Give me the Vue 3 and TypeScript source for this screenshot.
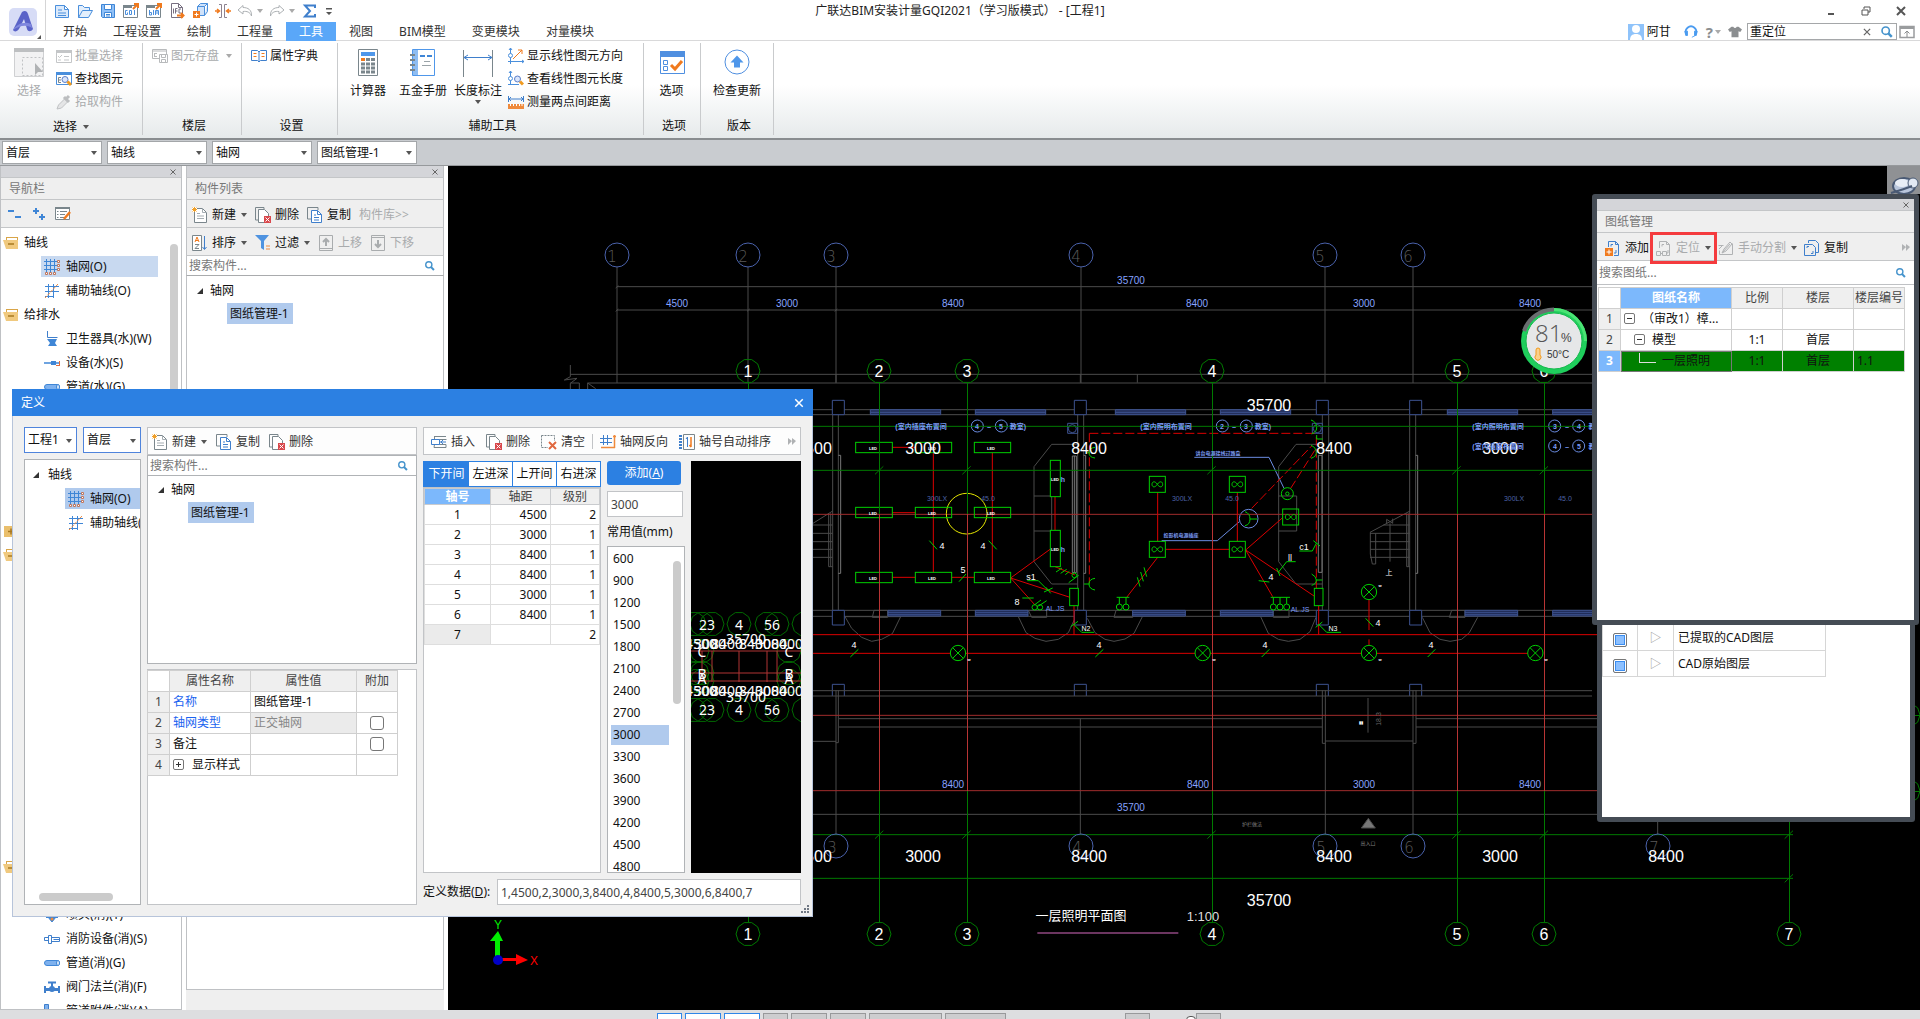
<script setup lang="ts">
import { ref } from 'vue'

const tabs = ['开始', '工程设置', '绘制', '工程量', '工具', '视图', 'BIM模型', '变更模块', '对量模块']
const activeTab = ref('工具')

const quick = ['new', 'open', 'save', 'gqi', 'bim', 'ifc', 'cube', 'merge']
const combos = ['首层', '轴线', '轴网', '图纸管理-1']

interface NavRow { label?: string; icon?: string; folder?: boolean; selected?: boolean }
const blank = (n: number): NavRow[] => Array.from({ length: n }, () => ({}))
const navRows: NavRow[] = [
  { label: '轴线', icon: 'folder-open', folder: true },
  { label: '轴网(O)', icon: 'grid', selected: true },
  { label: '辅助轴线(O)', icon: 'grid-aux' },
  { label: '给排水', icon: 'folder-open', folder: true },
  { label: '卫生器具(水)(W)', icon: 'toilet' },
  { label: '设备(水)(S)', icon: 'pump' },
  { label: '管道(水)(G)', icon: 'pipe' },
  ...blank(5),
  { icon: 'folder-closed', folder: true },
  { icon: 'folder-open', folder: true },
  ...blank(12),
  { icon: 'folder-open', folder: true },
  ...blank(1),
  { label: '喷头(消)(T)', icon: 'sprinkler' },
  { label: '消防设备(消)(S)', icon: 'fire' },
  { label: '管道(消)(G)', icon: 'pipe' },
  { label: '阀门法兰(消)(F)', icon: 'valve' },
  { label: '管道附件(消)(A)', icon: 'fitting' },
]

const spans = [
  ['1', '4500', '2'], ['2', '3000', '1'], ['3', '8400', '1'], ['4', '8400', '1'],
  ['5', '3000', '1'], ['6', '8400', '1'], ['7', '', '2'],
]
const spanTabs = ['下开间', '左进深', '上开间', '右进深']
const activeSpan = ref('下开间')
const common = ['600', '900', '1200', '1500', '1800', '2100', '2400', '2700', '3000', '3300', '3600', '3900', '4200', '4500', '4800']
const spacing = ref('3000')
const definition = ref('1,4500,2,3000,3,8400,4,8400,5,3000,6,8400,7')
const keyword = ref('重定位')

const greyAxes = [617, 748, 836, 1081, 1325, 1413]
const greenAxes = [748, 879, 967, 1212, 1457, 1544]
const decagon = (cx: number, cy: number, r = 12): string =>
  Array.from({ length: 10 }, (_, i) => {
    const a = (i * Math.PI) / 5
    return `${Math.round((cx + r * Math.cos(a)) * 10) / 10},${Math.round((cy + r * Math.sin(a)) * 10) / 10}`
  }).join(' ')

interface Note { t: string; x: number; y: number; c: string }
const notes: Note[] = [
  { t: '35700', x: 1131, y: 284, c: 'dim' },
  { t: '4500', x: 677, y: 307, c: 'dim' },
  { t: '3000', x: 787, y: 307, c: 'dim' },
  { t: '8400', x: 953, y: 307, c: 'dim' },
  { t: '8400', x: 1197, y: 307, c: 'dim' },
  { t: '3000', x: 1364, y: 307, c: 'dim' },
  { t: '8400', x: 1530, y: 307, c: 'dim' },
  { t: '8400', x: 953, y: 788, c: 'dim' },
  { t: '8400', x: 1198, y: 788, c: 'dim' },
  { t: '3000', x: 1364, y: 788, c: 'dim' },
  { t: '8400', x: 1530, y: 788, c: 'dim' },
  { t: '35700', x: 1131, y: 811, c: 'dim' },
  { t: '35700', x: 1269, y: 411, c: 'big' },
  { t: '4500', x: 814, y: 454, c: 'big' },
  { t: '3000', x: 923, y: 454, c: 'big' },
  { t: '8400', x: 1089, y: 454, c: 'big' },
  { t: '8400', x: 1334, y: 454, c: 'big' },
  { t: '3000', x: 1500, y: 454, c: 'big' },
  { t: '4500', x: 814, y: 862, c: 'big' },
  { t: '3000', x: 923, y: 862, c: 'big' },
  { t: '8400', x: 1089, y: 862, c: 'big' },
  { t: '8400', x: 1334, y: 862, c: 'big' },
  { t: '3000', x: 1500, y: 862, c: 'big' },
  { t: '8400', x: 1666, y: 862, c: 'big' },
  { t: '35700', x: 1269, y: 906, c: 'big' },
  { t: '(室内插座布置间', x: 921, y: 429, c: 'room' },
  { t: '教室)', x: 1018, y: 429, c: 'room' },
  { t: '~', x: 989, y: 430, c: 'room' },
  { t: '(室内照明布置间', x: 1166, y: 429, c: 'room' },
  { t: '~', x: 1234, y: 430, c: 'room' },
  { t: '教室)', x: 1263, y: 429, c: 'room' },
  { t: '(室内照明布置间', x: 1498, y: 429, c: 'room' },
  { t: '(室内插座布置间', x: 1498, y: 449, c: 'room' },
  { t: '~', x: 1567, y: 430, c: 'room' },
  { t: '~', x: 1567, y: 450, c: 'room' },
  { t: '教', x: 1592, y: 429, c: 'room' },
  { t: '教', x: 1592, y: 449, c: 'room' },
  { t: '4', x: 977, y: 429, c: 'room' },
  { t: '5', x: 1001, y: 429, c: 'room' },
  { t: '2', x: 1222, y: 429, c: 'room' },
  { t: '3', x: 1246, y: 429, c: 'room' },
  { t: '3', x: 1555, y: 429, c: 'room' },
  { t: '4', x: 1579, y: 429, c: 'room' },
  { t: '4', x: 1555, y: 449, c: 'room' },
  { t: '5', x: 1579, y: 449, c: 'room' },
  { t: '讲台电源接线过路盒', x: 1218, y: 455, c: 'tiny' },
  { t: '投影机电源插座', x: 1181, y: 537, c: 'tiny' },
  { t: 'h', x: 1063, y: 482, c: 'room' },
  { t: 'h', x: 1063, y: 552, c: 'room' },
  { t: '300LX', x: 937, y: 501, c: 'lux' },
  { t: '45.0', x: 988, y: 501, c: 'lux' },
  { t: '300LX', x: 1182, y: 501, c: 'lux' },
  { t: '45.0', x: 1232, y: 501, c: 'lux' },
  { t: '300LX', x: 1514, y: 501, c: 'lux' },
  { t: '45.0', x: 1565, y: 501, c: 'lux' },
  { t: 'AL.JS', x: 1055, y: 611, c: 'al' },
  { t: 'AL.JS', x: 1300, y: 612, c: 'al' },
  { t: '4', x: 942, y: 549, c: 'num' },
  { t: '4', x: 983, y: 549, c: 'num' },
  { t: '5', x: 963, y: 573, c: 'num' },
  { t: '8', x: 1017, y: 605, c: 'num' },
  { t: 's1', x: 1031, y: 580, c: 'num' },
  { t: 'c1', x: 1304, y: 550, c: 'num' },
  { t: 'll', x: 1290, y: 561, c: 'num' },
  { t: '4', x: 1271, y: 580, c: 'num' },
  { t: '4', x: 854, y: 648, c: 'num' },
  { t: '4', x: 1099, y: 648, c: 'num' },
  { t: '4', x: 1265, y: 648, c: 'num' },
  { t: '4', x: 1431, y: 648, c: 'num' },
  { t: '4', x: 1378, y: 626, c: 'num' },
  { t: 'N2', x: 1086, y: 631, c: 'tag' },
  { t: 'N3', x: 1333, y: 631, c: 'tag' },
  { t: '上', x: 1389, y: 575, c: 'up' },
  { t: 'w', x: 969, y: 661, c: 'led' },
  { t: 'w', x: 1214, y: 661, c: 'led' },
  { t: 'w', x: 1380, y: 661, c: 'led' },
  { t: 'w', x: 1546, y: 661, c: 'led' },
  { t: 'w', x: 1380, y: 587, c: 'led' },
  { t: '▮▮', x: 1361, y: 724, c: 'led' },
  { t: '护栏做法', x: 1252, y: 826, c: 'faint' },
  { t: '出入口', x: 1368, y: 845, c: 'faint' },
  { t: '一层照明平面图', x: 1081, y: 920, c: 'caption' },
  { t: '1:100', x: 1203, y: 921, c: 'ratio' },
]
const leds = [874, 933, 992].flatMap((x) => [448, 513, 578].map((y) => ({ x: x - 1, y: y + 2 })))
const lamps = [[474, 849], [1208, 849], [1707, 666], [1707, 849], [2206, 849]]
const fans = [[1048, 319], [1048, 514], [1288, 319], [1288, 514], [1448, 417]]
const windowsTop = [211, 526, 946, 1261, 1942, 2258]
const windowsLow = [264, 526, 998, 1261, 1995, 2258]
const columns = [97, 823, 1549, 1829]
const dimTicks = [238, 500, 1235, 1970, 2232, 2967]
</script>

<template>
  <div class="app">
    <svg class="sprite" width="0" height="0" aria-hidden="true">
      <symbol id="i-new" viewBox="0 0 16 16"><path d="M1.500 2.500h9l4 4v8h-13zM10.500 2.500v4h4M4 7h4M4 10h8M4 12.500h8" fill="#dceafb" stroke="#4a8fdc" /></symbol>
      <symbol id="i-open" viewBox="0 0 16 16"><path d="M1.500 14.500v-12h4l2 2h5v3M1.500 14.500l4-7h10l-4 7z" fill="#e4effc" stroke="#4a8fdc" /></symbol>
      <symbol id="i-save" viewBox="0 0 16 16"><path d="M1.500 1.500h13v13h-12l-1-1z" fill="#8fc0f7" stroke="#3f86d6" /><path d="M4.500 1.500h7v5h-7zM4.500 9.500h7v5h-7z" fill="#fff" stroke="#3f86d6" /><path d="M6 11.500h4M6 13h4" stroke="#3f86d6" /></symbol>
      <symbol id="i-gqi" viewBox="0 0 16 16"><path d="M.500 2.500h14v12H.500z" fill="#fff" stroke="#7a868c" /><path d="M0 2h9v3H0z" fill="#7a868c" /><path d="M4.500 7.500h-2v4h2v-2M6.500 7.500h2v4h-2zM11.500 7v5" fill="none" stroke="#4a8fdc" /><path d="M10 6l5-5M11 1h4v4" stroke="#f07a1e" stroke-width="2" fill="none" /></symbol>
      <symbol id="i-bim" viewBox="0 0 16 16"><path d="M.500 2.500h14v12H.500z" fill="#fff" stroke="#7a868c" /><path d="M0 2h9v3H0z" fill="#7a868c" /><path d="M3.500 7v5h2V9.500h-2M7.500 7v5M9.500 12V7.500h3V12M11 8v3" fill="none" stroke="#4a8fdc" /><path d="M10 6l5-5M11 1h4v4" stroke="#f07a1e" stroke-width="2" fill="none" /></symbol>
      <symbol id="i-ifc" viewBox="0 0 16 16"><path d="M2.500.500h7l4 4v10h-11zM9.500.500v4h4" fill="#fff" stroke="#776f80" /><path d="M4.500 5.500v5M6.500 10.500v-5h2M6.500 8h2M12 6h-2v4h2" fill="none" stroke="#776f80" /><path d="M8 12.500h6M12 10l2.500 2.500L12 15" fill="none" stroke="#f07a1e" stroke-width="2" /></symbol>
      <symbol id="i-cube" viewBox="0 0 16 16"><path d="M5.500 3.500h7v9h-7zM5.500 3.500l3-3h7l-3 3M15.500.500v8l-3 4" fill="#cfe2fa" stroke="#4a8fdc" /><path d="M1 8h7v7H1z" fill="#f07a1e" /><path d="M4.500 9.500v4M2.500 11.500h4" stroke="#fff" /></symbol>
      <symbol id="i-merge" viewBox="0 0 16 16"><path d="M4 1.500h2.500v13H4M12 1.500H9.500v13H12" fill="none" stroke="#8d8290" /><path d="M0 8h4M2 6l2.500 2L2 10M16 8h-4M14 6l-2.500 2 2.500 2" fill="none" stroke="#f07a1e" stroke-width="1.500" /></symbol>
      <symbol id="i-undo" viewBox="0 0 16 16"><path d="M6 2.500L1 7l5 4V8.500c4-.500 7 .500 8.500 4.500C15 7 11 4.500 6 4.500z" fill="#fff" stroke="#adb1b4" /></symbol>
      <symbol id="i-redo" viewBox="0 0 16 16"><path d="M10 2.500L15 7l-5 4V8.500C6 8 3 9 1.500 13 1 7 5 4.500 10 4.500z" fill="#fff" stroke="#adb1b4" /></symbol>
      <symbol id="i-sigma" viewBox="0 0 16 16"><path d="M13 5V2.500H3L8 8l-5 5.500h10V11" fill="none" stroke="#3f7fcc" stroke-width="2" /></symbol>
      <symbol id="i-more" viewBox="0 0 16 16"><path d="M5 5h6v1.500H5zM5 9h6l-3 3z" fill="#555" /></symbol>
      <symbol id="i-find" viewBox="0 0 16 16"><path d="M.500 1.500h15v12H.500z" fill="#fff" stroke="#4a8fdc" /><path d="M0 1h16v3H0z" fill="#4a8fdc" /><path d="M5 6.500H2.500v5H5M2.500 9H5" fill="none" stroke="#7a868c" /><circle cx="9" cy="8.500" r="3" fill="#dbe6fb" stroke="#5b7fc9" /><path d="M11.500 10.500l3.500 3.500" stroke="#f09a1e" stroke-width="3" /></symbol>
      <symbol id="i-batch" viewBox="0 0 16 16"><path d="M.500 2.500h15v12H.500z" fill="#fff" stroke="#c4c6c8" /><path d="M0 2h16v3H0z" fill="#c4c6c8" /><path d="M2 8l1.500 1.500L6 7M2 12h3M8 8.500h5M8 12h5" fill="none" stroke="#c4c6c8" /></symbol>
      <symbol id="i-pick" viewBox="0 0 16 16"><path d="M1 15l1.500-4 6-6 3 3-6 6z" fill="#e4e5e6" stroke="#c0c2c4" /><path d="M8 3l5 5M10 5l3-3" stroke="#bcbec0" stroke-width="3" /></symbol>
      <symbol id="i-store" viewBox="0 0 16 16"><path d="M.500 1.500h14v9H.500zM0 3h15" fill="none" stroke="#b8babc" /><path d="M2.500 5v4M5 5.500H3M5 8.500H3" stroke="#b8babc" /><path d="M7.500 6.500h8v8h-8zM9.500 6.500v3h4v-3M9.500 14v-2.500h4V14" fill="#fff" stroke="#b8babc" /></symbol>
      <symbol id="i-book" viewBox="0 0 16 16"><path d="M.500 2.500h6L8 4l1.500-1.500h6v10h-6L8 14l-1.500-1.500h-6zM8 4v10" fill="#fff" stroke="#3f7fcc" /><path d="M2.500 5.500h3M10.500 5.500h3" stroke="#f07a1e" /><path d="M2.500 8.500h3M10.500 8.500h3" stroke="#f07a1e" /></symbol>
      <symbol id="i-dir" viewBox="0 0 16 16"><path d="M2.500 0v16M0 13.500h16M1 2l1.500-2L4 2M14 12l2 1.500-2 1.500" fill="none" stroke="#4a8fdc" /><circle cx="2.500" cy="7.500" r="2" fill="#fff" stroke="#4a8fdc" /><path d="M5 11l9-9M10 2h4v4" fill="none" stroke="#f07a1e" /></symbol>
      <symbol id="i-len" viewBox="0 0 16 16"><path d="M2.500 0v14M0 13.500h11M1 2l1.500-2L4 2" fill="none" stroke="#4a8fdc" /><circle cx="2.500" cy="7.500" r="2" fill="#fff" stroke="#4a8fdc" /><circle cx="9.500" cy="8" r="3" fill="#dbe6fb" stroke="#5b7fc9" /><path d="M12 10.500l3 3" stroke="#f09a1e" stroke-width="3" /></symbol>
      <symbol id="i-measure" viewBox="0 0 16 16"><path d="M.500 2v6M15.500 2v6M1 5h14M3 3L1 5l2 2M13 3l2 2-2 2" fill="none" stroke="#3f7fcc" /><path d="M0 10h16v5H0z" fill="#ef8a3c" /><path d="M2.500 10v2M5.500 10v2M8.500 10v2M11.500 10v2M14 10v2" stroke="#fff" /></symbol>
      <symbol id="i-search" viewBox="0 0 16 16"><circle cx="7" cy="7" r="4.500" fill="none" stroke="#4593cc" stroke-width="2" /><path d="M10 10l4.500 4.500" stroke="#4593cc" stroke-width="3" /></symbol>
      <symbol id="i-minus" viewBox="0 0 16 16"><path d="M1 5h6M8 11h6" stroke="#3f86d6" stroke-width="2" /></symbol>
      <symbol id="i-plus" viewBox="0 0 16 16"><path d="M2 5h6M5 2v6M8 11h6M11 8v6" stroke="#3f86d6" stroke-width="2" /></symbol>
      <symbol id="i-edit" viewBox="0 0 16 16"><path d="M.500 1.500h14v12H.500z" fill="#fff" stroke="#7a868c" /><path d="M0 1h15v2H0z" fill="#7a868c" /><path d="M2 5.500h1.500M5 5.500h7M2 8.500h1.500M5 8.500h5M2 11.500h1.500M5 11.500h4" stroke="#7a868c" /><path d="M9 13l6-7" stroke="#f07a1e" stroke-width="2.500" /></symbol>
      <symbol id="i-folder-open" viewBox="0 0 16 16"><path d="M3 2h12v9H3z" fill="#d9a548" /><path d="M4 3h10v2H4z" fill="#fff" /><path d="M0 5h13l2 0v9H3z" fill="#f0c97e" /><path d="M5 9h6" stroke="#a87820" stroke-width="1.500" /></symbol>
      <symbol id="i-folder-closed" viewBox="0 0 16 16"><path d="M1 3h14v11H1z" fill="#eabf6c" /><path d="M5 8.500h6M8 5.500v6" stroke="#a87820" stroke-width="1.500" /></symbol>
      <symbol id="i-grid" viewBox="0 0 16 16"><path d="M0 2.500h13M0 6.500h13M0 10.500h13M2.500 0v13M6.500 0v13M10.500 0v13" stroke="#3f86d6" /><path d="M13.500 1.500h2v2h-2zM13.500 5.500h2v2h-2zM13.500 9.500h2v2h-2zM1.500 13.500h2v2h-2zM5.500 13.500h2v2h-2zM9.500 13.500h2v2h-2z" fill="#fff" stroke="#c0765c" /></symbol>
      <symbol id="i-grid-aux" viewBox="0 0 16 16"><path d="M1 3.500h14M1 8.500h14M1 13.500h9M4.500 1v14M9.500 1v14" stroke="#3f86d6" /><path d="M1 15L14 1" stroke="#ef8a3c" stroke-dasharray="3 1" /></symbol>
      <symbol id="i-toilet" viewBox="0 0 16 16"><path d="M3.500 0v6.500h10" fill="none" stroke="#3f7fcc" /><path d="M3 8h10l-2 4H6zM6 12h5l2 3H4z" fill="#3f86d6" /></symbol>
      <symbol id="i-pump" viewBox="0 0 16 16"><path d="M0 8h16" stroke="#3f86d6" stroke-width="1.500" /><path d="M7 6h5v4H7z" fill="#3f86d6" /><path d="M15.500 6v4M12 10.500h4" stroke="#e06a3a" /></symbol>
      <symbol id="i-pipe" viewBox="0 0 16 16"><rect x=".5" y="5.500" width="15" height="5" rx="2.500" fill="#7eb1ee" stroke="#3f86d6" /><ellipse cx="14" cy="8" rx="1.500" ry="2.500" fill="#dceafb" stroke="#3f86d6" /></symbol>
      <symbol id="i-sprinkler" viewBox="0 0 16 16"><path d="M8 1v9M4 10h8l-4 5zM2 10.500h12" fill="#3f86d6" stroke="#3f86d6" /><circle cx="8" cy="12" r="1.500" fill="#ef8a3c" /></symbol>
      <symbol id="i-fire" viewBox="0 0 16 16"><path d="M.500 6.500h4v3h-4zM4.500 4.500h3v8h-3zM7.500 6.500h8v4h-8zM9.500 8.500h6" fill="#fff" stroke="#3f7fcc" /></symbol>
      <symbol id="i-valve" viewBox="0 0 16 16"><path d="M4 3.500h8M8 3v5M1 7v7M15 7v7" stroke="#3f7fcc" stroke-width="2" /><path d="M1 9h14v3H1z" fill="#3f7fcc" /><circle cx="8" cy="10" r="3" fill="#3f7fcc" /></symbol>
      <symbol id="i-fitting" viewBox="0 0 16 16"><path d="M.500 1.500h4v8h-4zM4.500 6.500h10v4h-10z" fill="#7eb1ee" stroke="#3f7fcc" /><path d="M5 6v4" stroke="#ef8a3c" stroke-width="2" /></symbol>
      <symbol id="i-create" viewBox="0 0 16 16"><path d="M2.500 1.500h8l4 4v10h-12z" fill="#fff" stroke="#7a868c" /><path d="M10.500 1.500v4h4M5 9h7M5 11.500h7M5 6.500h3" fill="none" stroke="#a5adb2" /><path d="M0 0h5v5H0z" fill="#fff" /><path d="M2.500 0v5M0 2.500h5M.500.500l4 4M4.500.500l-4 4" stroke="#f0a02a" /></symbol>
      <symbol id="i-delete" viewBox="0 0 16 16"><path d="M9 2V.500H.500V13H3" fill="none" stroke="#7a868c" /><path d="M3.500 2.500h6l4 4v9h-10z" fill="#fff" stroke="#7a868c" /><path d="M9 9h7v7H9z" fill="#d9484c" /><path d="M10.500 10.500l4 4M14.500 10.500l-4 4" stroke="#fff" /></symbol>
      <symbol id="i-copy" viewBox="0 0 16 16"><path d="M11 3V.500H.500V12H4" fill="none" stroke="#7a868c" /><path d="M4.500 3.500h6l4 4v8h-10z" fill="#fff" stroke="#3f7fcc" /><path d="M10.500 3.500v4h4M7 8h2M7 10.500h5M7 13h5" fill="none" stroke="#3f7fcc" /></symbol>
      <symbol id="i-sort" viewBox="0 0 16 16"><path d="M.500.500h9v15h-9z" fill="#fff" stroke="#7a868c" /><path d="M3 7l2-5 2 5M3.500 5.500h3" fill="none" stroke="#f07a1e" /><path d="M3 9.500h4l-4 4h4" fill="none" stroke="#7a868c" /><path d="M12.500 1v13M10.500 12l2 2.500 2-2.500" fill="none" stroke="#3f7fcc" /></symbol>
      <symbol id="i-filter" viewBox="0 0 16 16"><path d="M0 0h14L9 6v9l-3-2V6z" fill="#4f93e0" /><path d="M11 11h4M11 14h4" stroke="#ef8a3c" /></symbol>
      <symbol id="i-up" viewBox="0 0 16 16"><path d="M1.500.500h13v15h-13zM2 13.500h12" fill="none" stroke="#a9acae" /><path d="M8 11V4M5 7l3-3 3 3" fill="none" stroke="#a9acae" stroke-width="2" /></symbol>
      <symbol id="i-down" viewBox="0 0 16 16"><path d="M1.500.500h13v15h-13zM2 2.500h12" fill="none" stroke="#a9acae" /><path d="M8 5v7M5 9l3 3 3-3" fill="none" stroke="#a9acae" stroke-width="2" /></symbol>
      <symbol id="i-insert" viewBox="0 0 16 16"><path d="M3 2.500h12M3.500 2.500v3h12M3 13.500h12v-3H3.500z" fill="none" stroke="#7a868c" /><path d="M.500 5.500h8v5h-8z" fill="#fff" stroke="#3f7fcc" /><path d="M9 8h6M12 6l-2 2 2 2" fill="none" stroke="#3f7fcc" /></symbol>
      <symbol id="i-clear" viewBox="0 0 16 16"><path d="M.500 1.500h13v12H.500z" fill="none" stroke="#7a868c" stroke-dasharray="2 1" /><path d="M7 7h9v9H7z" fill="#fff" /><path d="M8 8l7 7M15 8l-7 7" stroke="#e0683f" stroke-width="2" /></symbol>
      <symbol id="i-flip" viewBox="0 0 16 16"><path d="M0 4.500h12M0 8.500h12M3.500 1v10M7.500 1v10" stroke="#3f7fcc" /><path d="M14.500 1v13M1 13.500h14M13 2.500h3" fill="none" stroke="#ef8a3c" stroke-width="1.500" /></symbol>
      <symbol id="i-auto" viewBox="0 0 16 16"><path d="M4.500.500h11v15h-11z" fill="none" stroke="#7a868c" /><path d="M1.500 1v14" stroke="#3f7fcc" stroke-width="3" stroke-dasharray="2 1" /><path d="M8.500 3v10M7 5l1.500-2" stroke="#3f7fcc" fill="none" /><path d="M12 3v10M10.500 11l1.500 2" stroke="#ef7a1e" stroke-width="1.500" fill="none" /></symbol>
      <symbol id="i-addsheet" viewBox="0 0 16 16"><path d="M3.500 7V1.500h7l3 3v11H9M10.500 1.500v3h3M6 6.500V4.500h2M11 10v3H9" fill="none" stroke="#3f7fcc" /><path d="M0 8h8v8H0z" fill="#f07a1e" /><path d="M4 9.500v5M1.500 12h5" stroke="#fff" /></symbol>
      <symbol id="i-locate" viewBox="0 0 16 16"><path d="M3.500 8V1.500h7l3 3v11H11M10.500 1.500v3h3M6 6.500V4.500h2M12 10v3h-2M.500 11.500h4v4h-4zM6.500 11.500h4v4h-4zM4 13.500h3" fill="none" stroke="#b0b2b4" /></symbol>
      <symbol id="i-split" viewBox="0 0 16 16"><path d="M1.500 14.500h13M1.500 14.500v-4M14.500 14.500v-11M.500 5.500h5M4 13l2-4 6-7 2 2-6 7z" fill="none" stroke="#b0b2b4" /><path d="M1 9l4-4M5 12l7-8" stroke="#b0b2b4" /></symbol>
      <symbol id="i-copysheet" viewBox="0 0 16 16"><path d="M4.500 3V.500h7l3 3v9H12M.500 4.500h8l3 3v8h-11zM3 8V6.500h2M9 11v2.500H7" fill="none" stroke="#3f7fcc" /></symbol>
      <symbol id="i-head" viewBox="0 0 16 16"><path d="M3 11a6 6 0 1 1 10 0" fill="none" stroke="#4a9bf0" stroke-width="2" /><path d="M1 7h3v5H2zM15 7h-3v5h2zM9 14l4-2" fill="#4a9bf0" stroke="#4a9bf0" /></symbol>
      <symbol id="i-shirt" viewBox="0 0 16 16"><path d="M4 2h2c1 2 3 2 4 0h2l4 3-2 3-2-1v7H4V7L2 8 0 5z" fill="#8b8e90" /></symbol>
      <symbol id="i-collapse" viewBox="0 0 16 16"><path d="M1 2.500h14v11H1z" fill="#fff" stroke="#9a9c9e" stroke-width="1.500" /><path d="M1 2h14v3H1z" fill="#9a9c9e" /><path d="M8 13V7M5.500 9.500L8 7l2.500 2.500" fill="none" stroke="#8a8c8e" /></symbol>
      <symbol id="i-x" viewBox="0 0 16 16"><path d="M3 3l10 10M13 3L3 13" stroke="currentColor" stroke-width="2" /></symbol>
      <symbol id="b-select" viewBox="0 0 30 30"><path d="M.500 1.500h29v28H.500z" fill="#f2f2f3" stroke="#cfd0d2" /><path d="M0 1h30v4H0z" fill="#bdbfc1" /><path d="M8.500 10.500h20v18h-20z" fill="none" stroke="#c0c2c4" stroke-dasharray="2 2" /><path d="M21 16v12l3-3h5z" fill="#b0b2b4" /></symbol>
      <symbol id="b-calc" viewBox="0 0 30 30"><path d="M5.500 2.500h19v26h-19z" fill="#fff" stroke="#7a868c" /><path d="M8 5h14v4H8z" fill="#4f97ea" /><path d="M8 12.500h14M8 17h14M8 21h14M8 25h14" stroke="#7a868c" stroke-width="3" stroke-dasharray="4 1" /><path d="M8 11h4v3H8z" fill="#f07a1e" /></symbol>
      <symbol id="b-book" viewBox="0 0 30 30"><path d="M4.500 2.500h22v26h-22z" fill="#fff" stroke="#4f97ea" /><path d="M5 3h5v25H5z" fill="#8fbdf2" /><path d="M2 8h5M2 13h5M2 18h5M2 23h5" stroke="#7a868c" stroke-width="2" /><path d="M12 9h5M19 9h5" stroke="#3f86d6" stroke-width="2" /><path d="M16 14.500h6M14 18.500h9" stroke="#9aa3a8" /></symbol>
      <symbol id="b-len" viewBox="0 0 30 30"><path d="M.500 3v27M29.500 3v27" stroke="#7a868c" /><path d="M1 10.500h28M5 8l-4 2.500L5 13M25 8l4 2.500-4 2.500" fill="none" stroke="#3f7fcc" /></symbol>
      <symbol id="b-opt" viewBox="0 0 30 30"><path d="M3.500 4.500h24v22h-24z" fill="#fff" stroke="#4f8fe0" /><path d="M3 4h25v6H3z" fill="#4f8fe0" /><path d="M6.500 13.500h4v4h-4zM6.500 19.500h4v4h-4z" fill="none" stroke="#4f8fe0" /><path d="M14 18l4 4 7-8" fill="none" stroke="#f07a1e" stroke-width="3" /></symbol>
      <symbol id="b-update" viewBox="0 0 30 30"><circle cx="15" cy="15" r="12" fill="#fff" stroke="#4f8fe0" /><path d="M15 8.500l6.500 7H18v5h-6v-5H8.500z" fill="#4f97ea" /></symbol>
    </svg>

    <header class="head">
      <div class="logo">
        <svg width="28" height="28" viewBox="0 0 28 28"><rect width="28" height="28" rx="5" fill="#d7dcf6" /><path d="M4 22c3-6 6-12 9-18 3-2 5-1 6 2l5 15c-2 3-5 3-6 0l-3-10-5 10c-2 3-5 3-6 1z" fill="#5a63c8" /><path d="M4 22c4-6 11-9 18-6l1 4c-6-4-13-2-19 2z" fill="#8088de" /></svg>
        <i class="corner"></i>
      </div>
      <div class="head-rows">
        <div class="title-row">
          <div class="quick">
            <button v-for="q in quick" :key="q" class="q" :aria-label="q"><svg class="ic"><use :href="'#i-' + q" /></svg></button>
            <button class="q wide" aria-label="undo"><svg class="ic"><use href="#i-undo" /></svg><i class="tri pale"></i></button>
            <button class="q wide" aria-label="redo"><svg class="ic"><use href="#i-redo" /></svg><i class="tri pale"></i></button>
            <button class="q" aria-label="sum"><svg class="ic"><use href="#i-sigma" /></svg></button>
            <button class="q slim" aria-label="more"><svg class="ic"><use href="#i-more" /></svg></button>
          </div>
          <div class="title">广联达BIM安装计量GQI2021（学习版模式） - [工程1]</div>
          <div class="winbtns">
            <button aria-label="minimise"><svg width="10" height="10"><path d="M2 8h6" stroke="#555" stroke-width="2" /></svg></button>
            <button aria-label="restore"><svg width="10" height="10"><path d="M3 3V1h6v5H7M1 4h6v5H1z" fill="none" stroke="#555" stroke-width="1" /></svg></button>
            <button aria-label="close"><svg width="10" height="10"><path d="M1 1l8 8M9 1L1 9" stroke="#555" stroke-width="2" /></svg></button>
          </div>
        </div>
        <div class="tab-row">
          <nav class="tabs">
            <button v-for="t in tabs" :key="t" :class="{ on: t === activeTab }" @click="activeTab = t">{{ t }}</button>
          </nav>
          <div class="account">
            <svg class="avatar" width="16" height="16"><rect width="16" height="16" fill="#8fc3fa" /><circle cx="8" cy="5" r="4" fill="#fff" /><path d="M2 16c0-4 2-6 6-6s6 2 6 6z" fill="#fff" /></svg>
            <span>阿甘</span>
            <svg class="ic headset"><use href="#i-head" /></svg>
            <b class="help">?</b><i class="tri pale"></i>
            <svg class="ic shirt"><use href="#i-shirt" /></svg>
            <div class="find">
              <input v-model="keyword" aria-label="搜索" />
              <svg class="ic x"><use href="#i-x" /></svg>
              <svg class="ic"><use href="#i-search" /></svg>
            </div>
            <svg class="ic"><use href="#i-collapse" /></svg>
          </div>
        </div>
      </div>
    </header>

    <section class="ribbon">
      <div class="group g1">
        <div class="tools">
          <button class="large dis"><svg class="bic"><use href="#b-select" /></svg>选择</button>
          <div class="col">
            <button class="small dis"><svg class="ic"><use href="#i-batch" /></svg>批量选择</button>
            <button class="small"><svg class="ic"><use href="#i-find" /></svg>查找图元</button>
            <button class="small dis"><svg class="ic"><use href="#i-pick" /></svg>拾取构件</button>
          </div>
        </div>
        <div class="gname">选择<i class="tri"></i></div>
      </div>
      <div class="group g2">
        <div class="tools"><div class="col"><button class="small dis"><svg class="ic"><use href="#i-store" /></svg>图元存盘<i class="tri pale"></i></button></div></div>
        <div class="gname">楼层</div>
      </div>
      <div class="group g3">
        <div class="tools"><div class="col"><button class="small"><svg class="ic"><use href="#i-book" /></svg>属性字典</button></div></div>
        <div class="gname">设置</div>
      </div>
      <div class="group g4">
        <div class="tools">
          <button class="large"><svg class="bic"><use href="#b-calc" /></svg>计算器</button>
          <button class="large mid"><svg class="bic"><use href="#b-book" /></svg>五金手册</button>
          <button class="large"><svg class="bic"><use href="#b-len" /></svg>长度标注<i class="tri"></i></button>
          <div class="col">
            <button class="small"><svg class="ic"><use href="#i-dir" /></svg>显示线性图元方向</button>
            <button class="small"><svg class="ic"><use href="#i-len" /></svg>查看线性图元长度</button>
            <button class="small"><svg class="ic"><use href="#i-measure" /></svg>测量两点间距离</button>
          </div>
        </div>
        <div class="gname">辅助工具</div>
      </div>
      <div class="group g5">
        <div class="tools"><button class="large"><svg class="bic"><use href="#b-opt" /></svg>选项</button></div>
        <div class="gname">选项</div>
      </div>
      <div class="group g6">
        <div class="tools"><button class="large"><svg class="bic"><use href="#b-update" /></svg>检查更新</button></div>
        <div class="gname">版本</div>
      </div>
    </section>

    <section class="combos">
      <span v-for="c in combos" :key="c" class="combo"><select :aria-label="c"><option>{{ c }}</option></select><i class="tri"></i></span>
    </section>

    <main class="body">
      <aside class="nav">
        <div class="strip"><svg class="ic tiny-x"><use href="#i-x" /></svg></div>
        <div class="ptitle">导航栏</div>
        <div class="ptools nav-tools">
          <svg class="ic"><use href="#i-minus" /></svg>
          <svg class="ic"><use href="#i-plus" /></svg>
          <svg class="ic"><use href="#i-edit" /></svg>
        </div>
        <div class="nav-body">
          <ul class="tree">
            <li v-for="(r, i) in navRows" :key="i" :class="{ folder: r.folder, sel: r.selected }">
              <span class="row"><svg v-if="r.icon" class="ic"><use :href="'#i-' + r.icon" /></svg>{{ r.label }}</span>
            </li>
          </ul>
          <div class="bar"></div>
        </div>
      </aside>

      <aside class="comps">
        <div class="strip"><svg class="ic tiny-x"><use href="#i-x" /></svg></div>
        <div class="ptitle">构件列表</div>
        <div class="ptools">
          <button><svg class="ic"><use href="#i-create" /></svg>新建<i class="tri"></i></button>
          <button><svg class="ic"><use href="#i-delete" /></svg>删除</button>
          <button><svg class="ic"><use href="#i-copy" /></svg>复制</button>
          <button class="dis">构件库&gt;&gt;</button>
        </div>
        <div class="ptools">
          <button><svg class="ic"><use href="#i-sort" /></svg>排序<i class="tri"></i></button>
          <button><svg class="ic"><use href="#i-filter" /></svg>过滤<i class="tri"></i></button>
          <button class="dis"><svg class="ic"><use href="#i-up" /></svg>上移</button>
          <button class="dis"><svg class="ic"><use href="#i-down" /></svg>下移</button>
        </div>
        <div class="psearch"><input placeholder="搜索构件..." aria-label="搜索构件" /><svg class="ic s"><use href="#i-search" /></svg></div>
        <div class="comp-tree">
          <div class="node"><i class="exp"></i>轴网</div>
          <div class="leaf"><span>图纸管理-1</span></div>
        </div>
        <div class="comps-foot"></div>
      </aside>

      <section class="canvas">
        <!-- plan linework, three drawing units to a pixel -->
        <svg class="plan" viewBox="0 0 4416 2532" preserveAspectRatio="xMinYMin slice" aria-hidden="true">
          <g transform="translate(6 -18)" class="grey">
            <path d="M501 380H3432M501 450H3432M361 643H3432M413 669H3432M361 615v35l-18 10 38-5-20 15v20M388 690v-21h-27M413 690v-21l24 17M497 384l8-7M497 454l8-7M891 454l8-7M1154 454l8-7" />
            <path v-for="x in greyAxes" :key="x" :d="`M${(x - 450) * 3} 320V669`" />
          </g>
          <g transform="translate(1056 612)">
            <g class="grey">
              <path d="M39 119H2376M39 134H2376M39 721H2376M39 739H2376M1012 12v26M841 12v26M108 12v26" />
              <path d="M98 134V721M115 134V721M833 134V721M851 134V721M1567 134V721M1586 134V721M1829 134V721M1847 134V721" />
              <path d="M833 223H755L702 290V575L755 642H833M702 378h53v105h-53M1568 223h-80l-52 67v285l52 67h80M1436 378h54v105h-54" />
              <path d="M115 256h7v354h-7M817 258h12v350h-12zM823 258v350M851 256h6v354h-6M1555 256h11v351h-11zM1847 256h6v354h-6" stroke="#777" />
              <path d="M39 460L98 423M39 465H98M39 490H98M39 515H98M39 538H98M39 562H98M86 430V590H98M92 430V590" />
              <path d="M1710 487L1830 423M1750 465h80M1710 490h120M1710 515h120M1710 538h120M1710 562h120M1770 460V575M1711 487v65l6 30h10V490M1820 430v160h10M1825 430v160M1760 460v-12l18 12v-14" />
              <path d="M135 740l20 35 30 27 30 12 30-6 32-17 25-51zM655 740l23 48 27 17 33 9 37-6 30-20 20-43M862 745l23 43 30 20 27 6 33-7 27-17 25-50M1382 740l23 50 30 18 30 6 35-6 30-23 18-43M1867 742l23 46 30 20 30 6 35-6 23-20 25-46" />
              <path d="M222 721h41v21h-46zM685 721h55v21h-45zM948 721h50v21h-56zM1420 721h47v21h-47zM1955 721h40v21h-47z" />
            </g>
            <g class="blue">
              <path v-for="x in windowsTop" :key="'t' + x" :d="`M${x} 119v15h211v-15zM${x} 127h211`" fill="#232f5c" />
              <path v-for="x in windowsLow" :key="'l' + x" :d="`M${x} 721v17h158v-17zM${x} 727h158M${x} 733h158`" fill="#1b2650" />
              <path v-for="x in columns" :key="'c' + x" :d="`M${x} 91h36v43h-36zM${x} 721h36v44h-36zM${x} 978v-35h36v35`" fill="#000" />
              <path d="M803 160h30v30h-30zM1537 160h30v30h-30z" />
              <circle cx="817" cy="176" r="12" /><circle cx="1552" cy="176" r="12" />
            </g>
            <g class="lblue">
              <circle v-for="x in [532, 604, 1267, 1339, 2264, 2336]" :key="x" :cx="x" cy="168" r="18" />
              <circle cx="2264" cy="228" r="18" /><circle cx="2336" cy="228" r="18" />
              <path d="M1183 262H1407L1452 355M1085 512H1252L1318 455" />
              <circle cx="1346" cy="446" r="28" />
            </g>
            <g class="axis-red"><path d="M39 433H2376" /></g>
            <g class="red">
              <path d="M39 794H2391M39 850H2190" />
              <path d="M277 232H346M277 428H346M277 622H346M455 622H523M400 248V608M577 248V608M765 380V481M632 624L750 538M632 624L810 682M632 624L705 705M765 590L825 615M822 708V794" />
              <path d="M1073 367V514M1097 538H1288M1073 562L980 682M1312 367V514M1337 540L1448 443M1337 540L1545 680M1337 540L1418 680M1556 708V794M1707 690V780M1707 808V826" />
              <path d="M868 190H1545M868 190V640M1355 415L1535 228M1472 355L1545 240M1549 200V655" stroke-dasharray="27 9" />
            </g>
            <circle cx="500" cy="431" r="61" fill="none" stroke="#e6e600" />
            <g class="lime">
              <template v-for="y in [217, 412, 607]" :key="y">
                <rect x="167" :y="y" width="110" height="31" /><rect x="346" :y="y" width="109" height="31" /><rect x="523" :y="y" width="109" height="31" />
              </template>
              <rect x="751" y="271" width="30" height="109" fill="#000" /><rect x="751" y="481" width="30" height="109" fill="#000" />
              <rect x="809" y="655" width="26" height="52" fill="#000" /><rect x="1543" y="655" width="26" height="52" fill="#000" />
              <g v-for="f in fans" :key="f.join()" :transform="`translate(${f[0]} ${f[1]})`">
                <rect width="48" height="48" /><path d="M24 24c-8-12-16-8-16 0s8 12 16 0 16-8 16 0-8 12-16 0" />
              </g>
              <g v-for="l in lamps" :key="l.join()" :transform="`translate(${l[0]} ${l[1]})`">
                <circle r="23" fill="#000" /><path d="M-16-16L16 16M16-16L-16 16" />
              </g>
              <path d="M388 512l23 26M566 512l24 26M477 635l21-23M151 861l24-23M886 861l24-23M1385 861l23-23M1883 861l23-23M1697 745l23 25" />
              <path d="M682 632h33l30 30M732 666l26-12M738 652l14 18M667 684h34M703 705l20-15M716 708l24-16M768 606l18-12M782 610l18-12M796 614l12-10" />
              <circle cx="704" cy="712" r="8" /><circle cx="720" cy="712" r="8" /><circle cx="823" cy="616" r="7" />
              <path d="M806 638l30-22M820 762l25 25h37M812 770l22-16M1555 762l25 25h43M1547 772l20-16" />
              <path d="M852 642h16M885 625q-18 2-18 17t18 18M868 248h-6M885 232q-18 2-18 16t18 16M1533 150q15 5 17 20t-15 22M1535 612q14 8 14 18h18M1549 630q0 12-14 16M1550 195v12h18M1533 225q14 6 16 20t-16 20" />
              <path d="M950 682h38M958 682v20M978 682v20M1012 622l8 28M1022 606l8 28M1032 592l8 28M1412 682h58M1420 682v20M1440 682v20M1460 682v20M1376 632l32 4" />
              <circle cx="958" cy="711" r="9" /><circle cx="978" cy="711" r="9" />
              <circle cx="1420" cy="711" r="9" /><circle cx="1440" cy="711" r="9" /><circle cx="1460" cy="711" r="9" />
              <circle cx="1462" cy="371" r="18" /><circle cx="1462" cy="371" r="5" />
              <path d="M1335 425q15 5 15 22t-15 20M1350 447h22M1498 543h39l13-25M1540 512l20 16M1487 575h-27l-25 32M1430 594l10 24" />
            </g>
            <g class="green"><path d="M39 169H2376M39 301H2376" /><path v-for="x in dimTicks.slice(0, 5)" :key="x" :d="`M${x - 13} 313l25-24`" /></g>
          </g>
          <g transform="translate(1056 1572)">
            <g class="grey">
              <path d="M39 2H2376M39 18H2376M117 86H1567M117 111H1567M1848 86H2400M1848 111H2400M39 373H2400" />
              <path d="M39 154h69M108 0v432M115 0v158h-8M841 86v346M1576 0v432M1567 0v160h9M1839 0v432M1848 0v160h-9M1576 153h263M1704 24v104M2573 396v36" />
              <path d="M1684 414l21-29 21 29z" fill="#777" />
            </g>
            <g class="axis-red"><path d="M39 76H2400M39 302H2400" /></g>
            <g class="green"><path d="M39 434H2979M39 565H2979" /><path v-for="x in dimTicks" :key="x" :d="`M${x - 13} 446l25-24`" /><path d="M2954 577l25-24" /></g>
            <path d="M712 729H1135" stroke="#6b3560" stroke-width="6" />
          </g>
        </svg>
        <svg class="plan" viewBox="448 166 1472 844" preserveAspectRatio="xMinYMin slice">
          <g v-for="(x, i) in greyAxes" :key="'g' + x">
            <circle class="ring" :cx="x" cy="255" r="12" />
            <text class="gno" :x="x - 5" y="262">{{ i + 1 }}</text>
            <circle v-if="i > 1" class="ring" :cx="x" cy="846" r="12" />
            <text v-if="i > 1" class="gno" :x="x - 4" y="853">{{ i + 1 }}</text>
          </g>
          <circle class="ring" cx="1658" cy="846" r="12" /><text class="gno" x="1654" y="853">7</text>
          <g v-for="(x, i) in greenAxes" :key="'a' + x">
            <path class="gl" :d="`M${x} 383V514M${x} 791V922`" />
            <path class="rl" :d="`M${x} 514V791`" />
            <polygon class="deca" :points="decagon(x, 371)" /><text class="big" :x="x" y="377">{{ i + 1 }}</text>
            <polygon class="deca" :points="decagon(x, 934)" /><text class="big" :x="x" y="940">{{ i + 1 }}</text>
          </g>
          <path class="gl" d="M1789 822V922" />
          <polygon class="deca" :points="decagon(1789, 934)" /><text class="big" x="1789" y="940">7</text>
          <polygon class="deca" :points="decagon(1908, 715)" /><polygon class="deca" :points="decagon(1908, 791)" /><path class="gl" d="M1900 715h20M1900 791h20" />
          <text v-for="(l, i) in leds" :key="'d' + i" class="led" :x="l.x" :y="l.y">LED</text>
          <text class="led" x="1055" y="481">LED</text><text class="led" x="1055" y="551">LED</text>
          <text v-for="(n, i) in notes" :key="i" :class="n.c" :x="n.x" :y="n.y">{{ n.t }}</text>
          <text class="slope" transform="translate(1381 719) rotate(-90)">18.3</text>
          <path d="M495 958V941h-5l8-10 5 10h-3v17z" fill="#0e0" /><path d="M500 958h16v-4l12 6-12 5v-4h-16z" fill="#f00" /><circle cx="498" cy="960" r="5" fill="#0000c8" />
          <text class="ax" x="498" y="929" fill="#0e0">Y</text><text class="ax" x="534" y="965" fill="#f00">X</text>
        </svg>
        <div class="orb"><svg width="32" height="28"><ellipse cx="17" cy="20" rx="11" ry="8" fill="#b9c6dc" stroke="#4a5a74" stroke-width="2" /><ellipse cx="15" cy="17" rx="7" ry="4" fill="#e8eef6" /><circle cx="26" cy="17" r="5" fill="#e2e9f3" stroke="#4a5a74" /><path d="M4 27C14 24 20 22 25 20" stroke="#4a5a74" stroke-width="2" fill="none" /></svg></div>
      </section>
    </main>

    <footer class="status">
      <i class="w25 b"></i><i class="w36 b"></i><i class="w36 b"></i><i class="w25"></i><i class="w36"></i><i class="w36"></i><i class="w73"></i><i class="w61"></i><i class="w25 far"></i><span class="knob"></span><i class="w25"></i>
    </footer>

    <section class="layers">
      <table>
        <tbody>
          <tr><td class="c1"><input type="checkbox" checked aria-label="已提取的CAD图层" /></td><td class="c2">▷</td><td>已提取的CAD图层</td></tr>
          <tr><td class="c1"><input type="checkbox" checked aria-label="CAD原始图层" /></td><td class="c2">▷</td><td>CAD原始图层</td></tr>
        </tbody>
      </table>
    </section>

    <section class="sheets">
      <div class="strip"><svg class="ic tiny-x"><use href="#i-x" /></svg></div>
      <div class="ptitle">图纸管理</div>
      <div class="ptools sheet-tools">
        <button><svg class="ic"><use href="#i-addsheet" /></svg>添加</button>
        <button class="dis mark"><svg class="ic"><use href="#i-locate" /></svg>定位<i class="tri"></i></button>
        <button class="dis"><svg class="ic"><use href="#i-split" /></svg>手动分割<i class="tri"></i></button>
        <button><svg class="ic"><use href="#i-copysheet" /></svg>复制</button>
        <svg class="over" width="8" height="7"><path d="M0 0l4 3-4 4zM4 0l4 3-4 4z" fill="#b0b2b4" /></svg>
      </div>
      <div class="psearch tall"><input placeholder="搜索图纸..." aria-label="搜索图纸" /><svg class="ic s"><use href="#i-search" /></svg></div>
      <table class="grid sheet-grid">
        <thead><tr><th class="n"></th><th class="name hot">图纸名称</th><th class="r">比例</th><th class="f">楼层</th><th class="fn">楼层编号</th></tr></thead>
        <tbody>
          <tr><th>1</th><td class="t0"><i class="box minus"></i>（审改1）樟...</td><td></td><td></td><td></td></tr>
          <tr><th>2</th><td class="t1"><i class="box minus"></i>模型</td><td>1:1</td><td>首层</td><td></td></tr>
          <tr class="cur"><th>3</th><td class="t2"><i class="elbow"></i>一层照明</td><td>1:1</td><td>首层</td><td class="left">1.1</td></tr>
        </tbody>
      </table>
    </section>

    <svg class="gauge" viewBox="0 0 68 68">
      <circle cx="34" cy="34" r="33" fill="#1fce5c" />
      <path d="M34 2.500A31.500 31.500 0 0 0 4 24" fill="none" stroke="#6a6d70" stroke-width="4" />
      <path d="M34 2.500A31.500 31.500 0 0 1 65.500 34" fill="none" stroke="#4be374" stroke-width="3" />
      <circle cx="34" cy="34" r="28" fill="#e6e7e8" stroke="#17b94e" />
      <text x="15" y="35" class="pct">81</text><text x="41" y="35" class="sign">%</text>
      <path d="M18 41a2 2 0 0 1 2 2v5a3 3 0 1 1-4 0v-5a2 2 0 0 1 2-2z" fill="#fbd08a" stroke="#f39a1e" /><text x="27" y="51" class="deg">50°C</text>
    </svg>

    <section class="dialog" role="dialog" aria-label="定义">
      <div class="dtitle"><span>定义</span><button aria-label="关闭"><svg class="ic"><use href="#i-x" /></svg></button></div>
      <div class="dbody">
        <div class="dleft">
          <div class="dsel">
            <span class="combo blue-c"><select aria-label="工程"><option>工程1</option></select><i class="tri"></i></span>
            <span class="combo blue-c"><select aria-label="楼层"><option>首层</option></select><i class="tri"></i></span>
          </div>
          <div class="dtree">
            <div class="node"><i class="exp"></i>轴线</div>
            <div class="item sel2"><svg class="ic"><use href="#i-grid" /></svg>轴网(O)</div>
            <div class="item"><svg class="ic"><use href="#i-grid-aux" /></svg>辅助轴线(O)</div>
            <div class="hbar"></div>
          </div>
        </div>

        <div class="dmid">
          <div class="dtools">
            <button><svg class="ic"><use href="#i-create" /></svg>新建<i class="tri"></i></button>
            <button><svg class="ic"><use href="#i-copy" /></svg>复制</button>
            <button><svg class="ic"><use href="#i-delete" /></svg>删除</button>
          </div>
          <div class="psearch dsearch"><input placeholder="搜索构件..." aria-label="搜索构件" /><svg class="ic s"><use href="#i-search" /></svg></div>
          <div class="dcomp">
            <div class="node"><i class="exp"></i>轴网</div>
            <div class="leaf"><span>图纸管理-1</span></div>
          </div>
          <div class="dattr">
            <table class="grid attr">
              <thead><tr><th class="n"></th><th class="an">属性名称</th><th class="av">属性值</th><th class="aa">附加</th></tr></thead>
              <tbody>
                <tr><th>1</th><td><a href="#">名称</a></td><td>图纸管理-1</td><td></td></tr>
                <tr><th>2</th><td><a href="#">轴网类型</a></td><td class="ro">正交轴网</td><td class="cc"><input type="checkbox" aria-label="轴网类型" /></td></tr>
                <tr><th>3</th><td>备注</td><td></td><td class="cc"><input type="checkbox" aria-label="备注" /></td></tr>
                <tr><th>4</th><td><i class="box plus"></i>显示样式</td><td></td><td></td></tr>
              </tbody>
            </table>
          </div>
        </div>

        <div class="dright">
          <div class="dtools">
            <button><svg class="ic"><use href="#i-insert" /></svg>插入</button>
            <button><svg class="ic"><use href="#i-delete" /></svg>删除</button>
            <button><svg class="ic"><use href="#i-clear" /></svg>清空</button>
            <i class="vsep"></i>
            <button><svg class="ic"><use href="#i-flip" /></svg>轴网反向</button>
            <button><svg class="ic"><use href="#i-auto" /></svg>轴号自动排序</button>
            <svg class="over" width="8" height="7"><path d="M0 0l4 3-4 4zM4 0l4 3-4 4z" fill="#b0b2b4" /></svg>
          </div>
          <div class="dwork">
            <div class="spans">
              <div class="stabs"><button v-for="s in spanTabs" :key="s" :class="{ on: s === activeSpan }" @click="activeSpan = s">{{ s }}</button></div>
              <div class="sgrid">
                <table>
                  <thead><tr><th class="s1">轴号</th><th class="s2">轴距</th><th class="s3">级别</th></tr></thead>
                  <tbody><tr v-for="s in spans" :key="s[0]" :class="{ last: !s[1] }"><td>{{ s[0] }}</td><td>{{ s[1] }}</td><td>{{ s[2] }}</td></tr></tbody>
                </table>
              </div>
            </div>
            <div class="vals">
              <button class="add">添加(<u>A</u>)</button>
              <input id="spacing" v-model="spacing" />
              <label for="spacing">常用值(mm)</label>
              <div class="list"><ul><li v-for="c in common" :key="c" :class="{ pick: c === spacing }">{{ c }}</li></ul><div class="vbar"></div></div>
            </div>
            <svg class="preview" viewBox="0 0 110 412" preserveAspectRatio="xMidYMid slice">
              <g fill="none" stroke="#006a00">
                <template v-for="y in [163, 249]" :key="y"><polygon v-for="x in [3, 11, 21, 48, 76, 86, 113]" :key="x" :points="decagon(x, y)" /></template>
                <template v-for="y in [190, 212, 220]" :key="'s' + y"><polygon v-for="x in [6, 11, 98]" :key="x" :points="decagon(x, y)" /></template>
              </g>
              <path d="M0 190h110M0 212h110M0 220h110M11 190v31M21 190v31M48 190v31M76 190v31M86 190v31" stroke="#b03535" fill="none" />
              <g class="pt">
                <text x="16" y="169">23</text><text x="48" y="169">4</text><text x="81" y="169">56</text>
                <text x="16" y="254">23</text><text x="48" y="254">4</text><text x="81" y="254">56</text>
                <text x="55" y="183">35700</text><text x="55" y="241">35700</text>
                <text x="10" y="188">4500</text><text x="19" y="188">3000</text><text x="36" y="188">8400</text><text x="64" y="188">8400</text><text x="80" y="188">3000</text><text x="96" y="188">8400</text>
                <text x="10" y="235">4500</text><text x="19" y="235">3000</text><text x="36" y="235">8400</text><text x="64" y="235">8400</text><text x="80" y="235">3000</text><text x="96" y="235">8400</text>
                <text x="11" y="196">C</text><text x="98" y="196">C</text><text x="11" y="218">B</text><text x="98" y="218">B</text><text x="11" y="223">A</text><text x="98" y="223">A</text>
              </g>
            </svg>
          </div>
          <div class="defrow"><label for="def">定义数据(<u>D</u>):</label><input id="def" v-model="definition" /></div>
        </div>
      </div>
      <svg class="grip" width="10" height="8"><path d="M8 1h2M5 4h2M8 4h2M2 7h2M5 7h2M8 7h2" stroke="#707884" stroke-width="2" /></svg>
    </section>
  </div>
</template>

<style>
body { margin: 0; }
</style>

<style scoped>
.app, .app * { box-sizing: border-box; }
.app { position: relative; display: flex; flex-direction: column; height: 100vh; overflow: hidden; background: #fff; color: #111; font: 12px/16px "Noto Sans", "Noto Sans CJK SC", sans-serif; }
.sprite { position: absolute; }
button { border: 0; padding: 0; background: none; font: inherit; color: inherit; white-space: nowrap; }
input, select { font: inherit; color: inherit; }
ul { list-style: none; margin: 0; padding: 0; }
.ic { width: 16px; height: 16px; flex: none; display: block; }
.tri { display: inline-block; flex: none; border: 3px solid transparent; border-top: 4px solid #555; border-bottom: 0; }
.tri.pale { border-top-color: #aaa; }
.dis { color: #a9abad; }

.head { display: flex; flex: none; height: 41px; border-bottom: 1px solid #d9d9da; }
.logo { position: relative; width: 46px; padding: 8px 9px; border-right: 1px solid #d5d5d6; }
.logo svg { display: block; }
.corner { position: absolute; right: 4px; bottom: 1px; border: 2px solid transparent; border-right-color: #555; border-bottom-color: #555; }
.head-rows { flex: 1; min-width: 0; }
.title-row { display: grid; grid-template-columns: 1fr auto 1fr; height: 22px; }
.quick { display: flex; align-items: center; padding-left: 4px; }
.q { display: flex; align-items: center; justify-content: center; gap: 4px; width: 23px; }
.q.wide { width: 32px; }
.q.slim { width: 15px; }
.title { margin-right: 46px; padding-top: 3px; color: #222; white-space: nowrap; }
.winbtns { display: flex; justify-content: flex-end; align-items: center; gap: 25px; padding-right: 14px; }
.winbtns svg { display: block; }
.tab-row { display: flex; justify-content: space-between; height: 19px; }
.tabs { display: flex; padding-left: 4px; }
.tabs button { padding: 0 13px; color: #333; height: 19px; line-height: 19px; }
.tabs .on { background: #5aa7f8; color: #fff; }
.account { display: flex; align-items: center; padding-right: 5px; }
.account span { margin: 0 13px 0 3px; }
.headset { width: 14px; height: 14px; margin-right: 8px; }
.help { font-size: 15px; color: #8b8e90; margin-right: 2px; }
.shirt { width: 14px; margin: 0 5px 0 7px; }
.find { display: flex; align-items: center; gap: 8px; width: 150px; height: 17px; border: 1px solid #a5a7a9; margin-right: 2px; padding-right: 3px; }
.find input { flex: 1; min-width: 0; border: 0; padding: 0 2px; outline: 0; background: none; height: 15px; }
.find .ic { width: 13px; height: 13px; }
.find .x { width: 10px; height: 10px; color: #666; }

.ribbon { display: flex; flex: none; height: 99px; background: linear-gradient(#fff 45%, #e6eaeb); border-bottom: 2px solid #898d90; }
.group { display: flex; flex-direction: column; border-right: 1px solid #c9cbcd; margin: 2px 0 3px; padding-top: 1px; }
.g1 { width: 143px; } .g2 { width: 99px; } .g3 { width: 96px; } .g4 { width: 306px; } .g5 { width: 57px; } .g6 { width: 73px; }
.g2 .tools, .g3 .tools { padding-left: 9px; }
.tools { display: flex; height: 75px; }
.gname { display: flex; justify-content: center; align-items: center; gap: 6px; height: 18px; padding-left: 4px; }
.g1 .gname { height: 16px; padding: 0; }
.large { display: flex; flex-direction: column; align-items: center; width: 60px; padding-top: 3px; line-height: 18px; }
.large .bic { margin-bottom: 5px; }
.mid { width: 50px; }
.g5 .large { width: 55px; }
.g6 .large { width: 73px; }
.g1 .large { width: 56px; padding-left: 2px; }
.bic { width: 30px; height: 30px; flex: none; }
.small { display: flex; align-items: center; gap: 3px; height: 23px; }
.small .tri { margin-left: 4px; }

.combos { display: flex; flex: none; gap: 5px; height: 26px; padding: 1px 2px; background: #c9ccd0; border-bottom: 1px solid #96999c; }
.combo { position: relative; display: flex; width: 100px; height: 23px; }
.combo select { appearance: none; width: 100%; height: 100%; border: 1px solid #a3a6a9; border-radius: 0; background: #fff; padding: 0 3px; outline: 0; }
.combo .tri { position: absolute; right: 5px; top: 10px; pointer-events: none; }

.body { display: flex; flex: 1; min-height: 0; }
.nav { display: flex; flex-direction: column; width: 182px; border: 1px solid #bfc1c4; border-top: 0; margin-right: 4px; }
.comps { display: flex; flex-direction: column; width: 258px; margin-right: 4px; }
.comps > * { border-left: 1px solid #bfc1c4; border-right: 1px solid #bfc1c4; }
.strip { display: flex; flex: none; justify-content: flex-end; align-items: center; height: 12px; padding-right: 4px; background: #d4d5d9; border-bottom: 1px solid #c4c6c8; color: #666; }
.tiny-x { width: 8px; height: 8px; }
.ptitle { flex: none; height: 22px; padding-left: 8px; line-height: 22px; background: #efefef; border-bottom: 1px solid #c4c6c8; color: #777; }
.ptools { display: flex; flex: none; align-items: center; gap: 8px; height: 28px; padding: 2px 0 0 5px; background: #efefef; border-bottom: 1px solid #c4c6c8; }
.ptools button, .dtools button { display: flex; align-items: center; gap: 4px; }
.ptools .tri, .dtools .tri { margin-left: 1px; }
.nav-tools { padding: 0 0 0 6px; }
.nav-body { display: flex; flex: 1; min-height: 0; overflow: hidden; padding-top: 3px; }
.tree { flex: 1; }
.tree li { height: 24px; padding: 1px 0 0 40px; }
.tree .row { display: flex; align-items: center; gap: 6px; width: 117px; height: 22px; padding-left: 3px; white-space: nowrap; }
.tree .folder { padding-left: 0; }
.tree .folder .row { padding-left: 2px; gap: 5px; }
.tree .sel .row { background: #c8d9f0; height: 21px; }
.bar { flex: none; width: 8px; height: 420px; margin: 13px 3px 0 0; border-radius: 4px; background: #cdcdcd; }
.psearch { display: flex; flex: none; align-items: center; height: 19px; padding: 0 8px 0 2px; background: #fff; }
.psearch input { flex: 1; min-width: 0; height: 100%; border: 0; padding: 0; outline: 0; background: none; }
.psearch input::placeholder { color: #777; opacity: 1; }
.s { width: 11px; height: 11px; }
.comp-tree { flex: 1; border-top: 1px solid #a9abad; border-bottom: 1px solid #bfc1c4; padding-top: 3px; }
.comps-foot { flex: none; height: 20px; background: #efefef; border: 0; }
.node { display: flex; align-items: center; gap: 7px; height: 24px; padding-left: 10px; }
.exp { border: 3px solid transparent; border-right-color: #333; border-bottom-color: #333; }
.leaf { padding-left: 40px; }
.leaf span { display: inline-block; height: 21px; padding: 0 4px 0 3px; line-height: 21px; background: #b0caed; }

.canvas { position: relative; flex: 1; min-width: 0; overflow: hidden; background: #000; }
.plan { position: absolute; left: 0; top: 0; width: 100%; height: 100%; }
.grey, .blue, .lblue, .red, .axis-red, .lime, .green { fill: none; stroke-width: 3; }
.grey { stroke: #4b4b4b; }
.blue { stroke: #3d5290; }
.lblue { stroke: #6a8be0; }
.red { stroke: #dc0000; }
.axis-red { stroke: #a02c2c; }
.lime { stroke: #00cf00; }
.green { stroke: #007a00; }
.plan circle { stroke-width: 3; }
.plan .ring { fill: none; stroke: #4a62ac; stroke-width: 1; }
.deca { fill: none; stroke: #007a00; }
.gl { stroke: #007a00; stroke-width: 1; shape-rendering: crispEdges; }
.rl { stroke: #b83434; stroke-width: 1; shape-rendering: crispEdges; }
.plan text { text-anchor: middle; font-family: "Liberation Sans Narrow", "Liberation Sans", "Noto Sans CJK SC", sans-serif; }
.plan .gno { fill: #5a5a5a; font: 15px "DejaVu Sans", sans-serif; font-weight: 200; }
.plan .big { fill: #fff; font-family: "Liberation Sans", sans-serif; font-size: 16px; }
.dim { fill: #86a3ff; font-size: 10px; }
.room, .tiny { fill: #7b9bf5; font-size: 7px; font-weight: 700; }
.tiny { font-size: 5px; }
.lux { fill: #4c62a6; font-size: 7px; }
.al { fill: #7b9bf5; font-size: 7px; }
.num { fill: #fff; font-size: 9px; }
.tag { fill: #fff; font-size: 7px; }
.up { fill: #fff; font-size: 7px; }
.led { fill: #fff; font-size: 4px; font-weight: 700; }
.faint { fill: #808080; font-size: 5px; }
.slope { fill: #666; font-size: 7px; }
.caption { fill: #fff; font-size: 13px; }
.ratio { fill: #ddd; font-size: 13px; }
.ax { font-size: 12px; }
.orb { position: absolute; top: 0; right: 0; width: 33px; height: 28px; background: #8f9194; }

.status { display: flex; flex: none; gap: 3px; height: 9px; padding: 3px 0 0 657px; background: #dddee0; overflow: hidden; }
.status i { flex: none; height: 10px; border: 1px solid #98999b; background: #cdcdcf; }
.status .b { border-color: #2f86e8; background: #fff; }
.w25 { width: 25px; } .w36 { width: 36px; } .w73 { width: 73px; } .w61 { width: 61px; }
.far { margin-left: 116px; }
.knob { width: 10px; height: 10px; margin: 3px -3px 0 33px; border: 1px solid #555; border-radius: 4px; background: #fff; }

.layers { position: absolute; top: 620px; right: 5px; width: 318px; height: 202px; border: 5px solid #454c55; border-radius: 3px; background: #fff; }
.layers table { border-collapse: collapse; margin-top: -1px; }
.layers td { width: 152px; height: 26px; padding: 0 4px; border: 1px solid #d6d6d6; }
.layers .c1 { width: 35px; text-align: center; }
.layers .c2 { width: 36px; text-align: center; color: #999; }
.layers input { appearance: none; width: 14px; height: 14px; margin: 4px 0 0; border: 1px solid #777; border-radius: 2px; background: #8cc0ff; box-shadow: inset 0 0 0 1px #fff, inset 0 0 0 2px #3b8df0; vertical-align: middle; }

.sheets { position: absolute; top: 194px; right: 1px; width: 327px; height: 431px; border: 5px solid #454c55; border-radius: 3px; background: #fff; }
.sheet-tools { gap: 7px; padding-left: 8px; }
.over { display: block; flex: none; margin: 0 4px 0 auto; }
.mark { position: relative; }
.mark::after { content: ""; position: absolute; inset: -8px -6px; border: 3px solid #f43b3e; }
.tall { height: 24px; border-bottom: 1px solid #bfc1c4; margin-bottom: 2px; }
.grid { border-collapse: collapse; table-layout: fixed; }
.grid th, .grid td { height: 21px; padding: 0 3px; border: 1px solid #cfcfcf; font-weight: 400; white-space: nowrap; line-height: 18px; }
.grid th { background: #efefef; color: #444; padding: 0; }
.grid thead .n { background: #fff; width: 22px; }
.sheet-grid { margin-left: 1px; width: 307px; }
.grid .name { width: 111px; } .grid .r { width: 51px; } .grid .f { width: 71px; }
.sheet-grid td { text-align: center; overflow: hidden; }
.sheet-grid td:nth-child(2) { text-align: left; }
.sheet-grid .left { text-align: left; }
.grid .hot { background: #7cb8fc; color: #fff; font-weight: 700; }
.cur td { background: #008000; color: #111; }
.sheet-grid .cur th { background: #7cb8fc; color: #fff; font-weight: 700; }
.cur td:nth-child(2) { outline: 1px solid #777; outline-offset: -1px; }
.box { display: inline-block; position: relative; width: 11px; height: 11px; margin-right: 7px; border: 1px solid #777; border-radius: 2px; vertical-align: -1px; }
.box::before { content: ""; position: absolute; left: 2px; top: 4px; width: 5px; height: 1px; background: #333; }
.plus::after { content: ""; position: absolute; left: 4px; top: 2px; width: 1px; height: 5px; background: #333; }
.grid .t1 { padding-left: 13px; }
.grid .t2 { padding-left: 18px; }
.elbow { display: inline-block; width: 17px; height: 10px; margin-right: 6px; border: 1px solid #ddd; border-top: 0; border-right: 0; vertical-align: 2px; }

.gauge { position: absolute; top: 307px; right: 332px; width: 68px; height: 68px; }
.pct { font: 24px "Open Sans", sans-serif; fill: #555; font-weight: 300; }
.sign { font: 12px "Liberation Sans", sans-serif; fill: #444; }
.deg { font: 10px "Liberation Sans", sans-serif; fill: #333; }

.dialog { position: absolute; top: 389px; left: 12px; width: 801px; height: 528px; background: #f0f0f0; border: 1px solid #b7c4da; border-top: 0; }
.dtitle { display: flex; justify-content: space-between; align-items: center; height: 27px; margin: 0 -1px; padding: 0 8px 0 9px; background: #2c80e2; color: #fff; }
.dtitle .ic { width: 12px; height: 12px; }
.dbody { display: flex; gap: 6px; height: 489px; padding: 11px 11px 0; }
.dleft { display: flex; flex-direction: column; gap: 6px; width: 117px; }
.dsel { display: flex; justify-content: space-between; }
.dsel .combo { width: 53px; height: 26px; }
.dsel .combo:last-child { width: 58px; }
.blue-c select { border-color: #4f84dc; }
.combo.blue-c .tri { top: 12px; }
.dtree { position: relative; flex: 1; border: 1px solid #b0b3b6; background: #fff; padding-top: 3px; overflow: hidden; }
.dtree .node { padding-left: 8px; gap: 9px; }
.item { display: flex; align-items: center; gap: 6px; height: 24px; padding-left: 43px; white-space: nowrap; }
.sel2 { height: 21px; margin: 1px 0 2px 40px; padding-left: 3px; background: #b0caed; }
.hbar { position: absolute; left: 14px; bottom: 3px; width: 74px; height: 8px; border-radius: 4px; background: #cbcbcb; }
.dmid { display: flex; flex-direction: column; width: 270px; }
.dtools { display: flex; flex: none; align-items: center; gap: 9px; height: 28px; padding: 1px 0 0 4px; border: 1px solid #c2c4c7; background: #fdfdfd; color: #333; }
.dsearch { height: 21px; border: 1px solid #b0b3b6; }
.dcomp { height: 188px; border: 1px solid #b0b3b6; border-top: 0; background: #fff; padding-top: 2px; }
.dcomp .node { height: 24px; }
.dattr { flex: 1; margin-top: 5px; border: 1px solid #c2c4c7; background: #fff; }
.attr { width: 251px; margin-left: -1px; }
.attr .an { width: 81px; } .attr .av { width: 106px; }
.attr a { color: #1a63f0; text-decoration: none; }
.attr .ro { background: #ebebeb; color: #888; }
.attr .plus { margin-right: 8px; }
.cc { text-align: center; }
.cc input { appearance: none; display: block; width: 14px; height: 14px; margin: 0 auto; border: 1px solid #777; border-radius: 3px; background: #fff; }
.dright { display: flex; flex: 1; flex-direction: column; gap: 6px; min-width: 0; }
.dright .dtools { padding-left: 7px; gap: 11px; }
.vsep { width: 1px; height: 15px; margin: 0 -4px; background: #c2c4c7; }
.dwork { display: flex; flex: 1; gap: 6px; min-height: 0; }
.spans { display: flex; flex-direction: column; width: 178px; }
.stabs { display: flex; flex: none; height: 26px; border: 1px solid #2c80e2; background: #fff; }
.stabs button { flex: 1; border-left: 1px solid #2c80e2; }
.stabs .on { background: #2c80e2; color: #fff; }
.sgrid { flex: 1; border: 1px solid #c2c4c7; background: #fff; }
.sgrid table { width: 100%; border-collapse: collapse; table-layout: fixed; }
.sgrid th { height: 16px; padding: 0; line-height: 14px; border: 1px solid #c9cbce; background: #efefef; font-weight: 400; color: #444; }
.sgrid .s1 { width: 66px; background: #7cb8fc; color: #fff; font-weight: 700; }
.sgrid .s2 { width: 60px; }
.sgrid td { height: 20px; padding: 0 3px; line-height: 18px; border: 1px solid #dedede; text-align: right; }
.sgrid td:first-child { text-align: center; }
.last td:first-child { background: #ebebeb; }
.vals { display: flex; flex-direction: column; width: 78px; }
.add { width: 74px; height: 24px; border-radius: 3px; background: #2c80e2; color: #fff; }
.vals input { width: 76px; height: 26px; margin-top: 6px; padding: 0 3px; border: 1px solid #c2c4c7; background: #fff; color: #444; }
.vals label { height: 29px; line-height: 30px; }
.list { position: relative; flex: 1; border: 1px solid #b0b3b6; background: #fff; padding-top: 1px; overflow: hidden; min-height: 0; }
.vals li { width: 58px; height: 20px; margin: 1px 3px 2px; padding-left: 2px; line-height: 20px; }
.pick { background: #b0caed; }
.vbar { position: absolute; right: 3px; top: 14px; width: 8px; height: 143px; border-radius: 4px; background: #cbcbcb; }
.preview { flex: 1; min-width: 0; height: 412px; background: #000; }
.pt text { fill: #fff; font: 14px "Noto Sans", sans-serif; text-anchor: middle; }
.defrow { display: flex; flex: none; align-items: center; justify-content: space-between; height: 26px; }
.defrow input { width: 304px; height: 26px; padding: 0 3px; border: 1px solid #c2c4c7; background: #fff; color: #444; }
.grip { position: absolute; right: 3px; bottom: 3px; }
</style>
